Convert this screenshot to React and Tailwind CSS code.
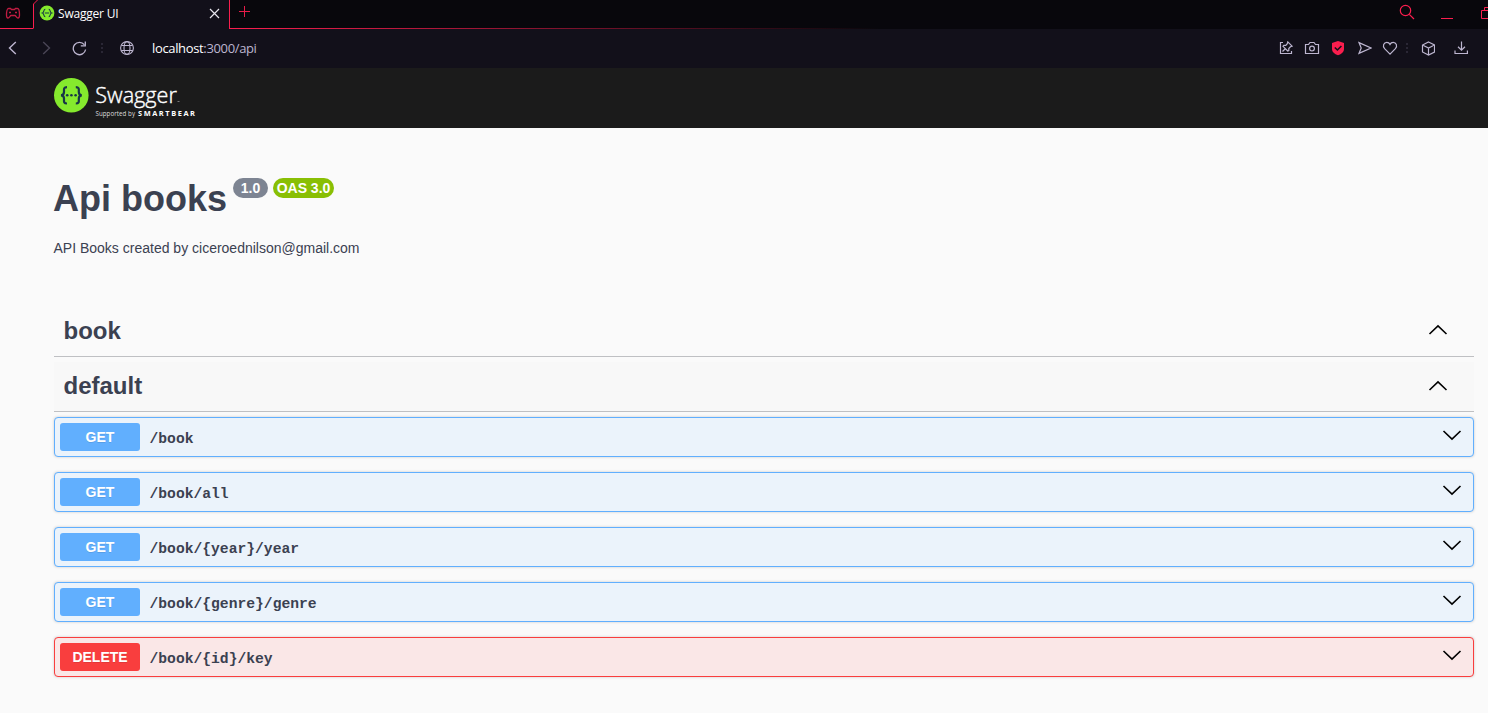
const operations = [
  { method: 'GET', path: '/book' },
  { method: 'GET', path: '/book/all' },
  { method: 'GET', path: '/book/{year}/year' },
  { method: 'GET', path: '/book/{genre}/genre' },
  { method: 'DELETE', path: '/book/{id}/key' },
];

const tones = {
  GET: { row: 'border-[#61affe] bg-[#ebf3fb]', badge: 'bg-[#61affe]' },
  DELETE: { row: 'border-[#f93e3e] bg-[#fae7e7]', badge: 'bg-[#f93e3e]' },
};

function Icon({ w = 16, h = 16, className = '', children, stroke = 1.2 }) {
  return (
    <svg
      width={w}
      height={h}
      viewBox={`0 0 ${w} ${h}`}
      fill="none"
      stroke="currentColor"
      strokeWidth={stroke}
      className={`shrink-0 ${className}`}
    >
      {children}
    </svg>
  );
}

function TabStrip() {
  return (
    <div className="flex h-[29px] bg-[#08070c] text-[#fa1e4e]">
      <div className="w-[33px] border-b border-[#fa1e4e] pt-[7px] pl-[5px]">
        <Icon w={16} h={13} stroke={1.3} className="text-[#c01c42]">
          <path d="M3.500 1.500H5.500l1 1h3l1-1h2c1.500 0 2 3.500 2 6.500 0 2.200-.4 3-1.500 3-1.300 0-2.200-2.500-3-2.500H6c-.8 0-1.700 2.500-3 2.500-1.100 0-1.500-.8-1.500-3 0-3 .5-6.500 2-6.500z" />
          <path d="M4 5.500h2M5 4.500v2M10 5.500h2M11 4.500v2" strokeWidth="1" />
        </Icon>
      </div>
      <div className="flex w-[197px] border-r border-[#fa1e4e] bg-[#12101a]">
        <svg width="6" height="29" viewBox="0 0 6 29" fill="none" className="shrink-0">
          <path d="M0 0h4.500L.5 4.500V29H0z" fill="#08070c" />
          <path d="M4.500 0L.5 4V28.500" stroke="#fa1e4e" />
        </svg>
        <svg width="16" height="16" viewBox="0 0 16 16" fill="none" className="mt-[5px] shrink-0">
          <circle cx="8" cy="8" r="7.400" fill="#85ea2d" />
          <path d="M6.300 4.300c-2 0-1 3.200-2.800 3.700 1.800.5.800 3.700 2.800 3.700M9.700 4.300c2 0 1 3.200 2.800 3.700-1.800.5-.8 3.700-2.800 3.700M5.800 8h4.400" stroke="#173647" strokeWidth="1.100" />
        </svg>
        <span className="mt-[5px] ml-[3px] w-[146px] font-['Open_Sans','Noto_Sans',sans-serif] text-[12px] leading-[17px] tracking-[-0.2px] text-white">
          Swagger UI
        </span>
        <Icon w={11} h={11} className="mt-[8px] ml-[5px] text-[#e8e6ee]">
          <path d="M1 1l9 9M10 1l-9 9" />
        </Icon>
      </div>
      <div className="relative flex grow pt-[4px]">
        <div className="absolute bottom-0 left-0 h-px w-[650px] bg-linear-to-r from-[#fa1e4e] to-transparent" />
        <Icon w={12} h={15} stroke={1} className="ml-[8px] text-[#e81c49]">
          <path d="M1 7.500h11M6.500 2v11" />
        </Icon>
        <Icon w={16} h={16} className="ml-auto">
          <circle cx="6.500" cy="6.500" r="5.200" />
          <path d="M10.300 10.300l4.700 4.700" />
        </Icon>
        <Icon w={12} h={16} stroke={1} className="ml-[26px]">
          <path d="M0 14.500h12" />
        </Icon>
        <Icon w={7} h={16} stroke={1} className="ml-[28px]">
          <path d="M7 6.500H.5v8H7M3.500 6.500v-3H7" />
        </Icon>
      </div>
    </div>
  );
}

function AddressBar() {
  return (
    <div className="flex h-[39px] items-center bg-[#12101a] pb-px text-[#bdb6d0]">
      <Icon w={9} h={14} stroke={1.4} className="ml-[8px]">
        <path d="M7.800 1L1.500 7l6.300 6" />
      </Icon>
      <Icon w={9} h={14} stroke={1.400} className="ml-[25px] text-[#4a4656]">
        <path d="M1.200 1l6.300 6-6.300 6" />
      </Icon>
      <Icon w={16} h={16} stroke={1.300} className="ml-[20px]">
        <path d="M13.300 4.600A6.200 6.200 0 1 0 14.600 9.500M14.300 1.500v4.300H9.800" />
      </Icon>
      <Icon w={2} h={10} stroke={2} className="ml-[14px] text-[#2a2735]">
        <path d="M1 0v2M1 4v2M1 8v2" />
      </Icon>
      <Icon w={16} h={16} stroke={1.100} className="ml-[16px]">
        <circle cx="8" cy="8" r="6.400" />
        <ellipse cx="8" cy="8" rx="3" ry="6.400" />
        <path d="M2.500 5.500h11M2.500 10.500h11" />
      </Icon>
      <span className="ml-[17px] pt-px font-['Open_Sans','Noto_Sans',sans-serif] text-[13px] tracking-[-0.35px] whitespace-nowrap">
        <span className="text-white">localhost</span>:3000/api
      </span>
      <div className="ml-auto flex items-center">
        <Icon w={14} h={14} stroke={1.200}>
          <path d="M4 1.500H1.500v11h11V10M3.500 10.500L6 8M8.800.900l4.300 4.300-1.700.6-1.600 1.700v2L8.700 10 4 5.300l.8-1h2l1.500-1.600z" />
        </Icon>
        <Icon w={16} h={14} className="ml-[11px]">
          <path d="M1.500 3.500h3L6 1.500h4l1.500 2h3v9h-13z" />
          <circle cx="8" cy="7.600" r="2.400" />
        </Icon>
        <svg width="14" height="16" viewBox="0 0 14 16" fill="none" className="ml-[11px]">
          <path d="M7 1l6 2v6c0 3-2.500 5-6 6.200C3.500 14 1 12 1 9V3z" fill="#fa1e4e" />
          <path d="M3.800 7.500l2.600 2.500L10.400 6" stroke="#12101a" strokeWidth="1.600" />
        </svg>
        <Icon w={14} h={14} className="ml-[13px]">
          <path d="M1 1.600L13 7 1 12.400 3.200 7z" />
        </Icon>
        <Icon w={16} h={16} className="ml-[10px]">
          <path d="M8 14.200L2.600 8.700C.2 6 1.800 2.300 4.800 2.300 6.400 2.300 7.500 3.300 8 4.400c.5-1.100 1.600-2.100 3.200-2.100 3 0 4.600 3.700 2.200 6.400z" />
        </Icon>
        <Icon w={2} h={10} stroke={2} className="ml-[8px] text-[#2a2735]">
          <path d="M1 0v2M1 4v2M1 8v2" />
        </Icon>
        <Icon w={14} h={15} stroke={1.200} className="ml-[13px]">
          <path d="M7.500 1l6 3v7l-6 3-6-3V4zM1.500 4l6 3 6-3M7.500 7v7" />
        </Icon>
        <Icon w={14} h={14} stroke={1.200} className="mr-[20px] ml-[19px]">
          <path d="M7.500 .5V9M4 5.800l3.500 3.400L11 5.800M1 9.500v3h12.400v-3" />
        </Icon>
      </div>
    </div>
  );
}

function Logo() {
  return (
    <svg width="146" height="44" viewBox="0 0 146 44" role="img">
      <circle cx="17.300" cy="19.300" r="17.300" fill="#85ea2d" />
      <g fill="none" stroke="#173647" strokeWidth="2.200">
        <path d="M13 11.200c-3.900 0-2.900 2.600-3 4.900 0 1.900-.9 3.100-3 3.200 2.100.1 3 1.400 3 3.200.1 2.400-.9 5 3 5" />
        <path d="M21.800 11.200c3.900 0 2.900 2.600 3 4.900 0 1.900.9 3.100 3 3.200-2.100.1-3 1.400-3 3.200-.1 2.400.9 5-3 5" />
      </g>
      <g fill="#173647">
        <circle cx="13.200" cy="19.300" r="1.300" />
        <circle cx="17.400" cy="19.300" r="1.300" />
        <circle cx="21.600" cy="19.300" r="1.300" />
      </g>
      <g fill="#fff" fontFamily="'Open Sans', 'Noto Sans', sans-serif">
        <text x="41.300" y="27" fontSize="22" fontWeight="300" textLength="81.500" lengthAdjust="spacingAndGlyphs" stroke="#fff" strokeWidth="0.400">Swagger</text>
        <text x="41.500" y="40" fontSize="6.200" textLength="39.500" lengthAdjust="spacing" fill="#ddd">Supported by</text>
        <text x="84" y="40" fontSize="7.400" fontWeight="700" textLength="57" lengthAdjust="spacing">SMARTBEAR</text>
      </g>
      <path d="M123.500 25.500h2" stroke="#777" />
    </svg>
  );
}

function Chevron({ up, className = '' }) {
  return (
    <svg width="20" height="12" viewBox="0 0 20 12" fill="none" stroke="#000" strokeWidth="1.600" className={`shrink-0 ${className}`}>
      <path d={up ? 'M1.500 10L10 1.800l8.500 8.200' : 'M1.500 2L10 10.200 18.500 2'} />
    </svg>
  );
}

function Section({ title, className = '', chevronClass = '' }) {
  return (
    <div className={`flex items-center justify-between border-b border-[#bfc0c3] pr-[26px] pl-[9.500px] ${className}`}>
      <h3 className="text-[24px] leading-[28px] font-bold">{title}</h3>
      <Chevron up className={chevronClass} />
    </div>
  );
}

function Operation({ method, path }) {
  const tone = tones[method];
  return (
    <div className={`flex h-[40px] items-center rounded-[4px] border pr-[11px] pl-[5px] shadow-[0_0_3px_rgba(0,0,0,0.19)] ${tone.row}`}>
      <span
        className={`flex h-[28px] w-[80px] items-center justify-center rounded-[3px] text-[14px] font-bold text-white [text-shadow:0_1px_0_rgba(0,0,0,0.1)] ${tone.badge}`}
      >
        {method}
      </span>
      <span className="mt-[4px] ml-[9.500px] font-['Liberation_Mono',monospace] text-[14.66px] leading-[18px] font-bold">{path}</span>
      <Chevron className="mb-[4px] ml-auto" />
    </div>
  );
}

export default function App() {
  return (
    <div className="h-[713px] w-[1488px] overflow-hidden bg-[#fafafa] font-['Liberation_Sans',Arial,sans-serif] text-[#3b4151]">
      <TabStrip />
      <AddressBar />
      <header className="h-[60px] bg-[#1b1b1b] pt-[8px] pl-[54px]">
        <Logo />
      </header>
      <main className="pr-[14px] pl-[54px]">
        <div className="flex items-start pt-[50px]">
          <h1 className="-ml-px w-[180px] text-[36px] leading-[42px] font-bold whitespace-nowrap">Api books</h1>
          <span className="flex h-[20px] w-[35px] items-center justify-center rounded-full bg-[#7d8492] text-[14px] font-bold text-white">
            1.0
          </span>
          <span className="ml-[5px] flex h-[20px] w-[61px] items-center justify-center rounded-full bg-[#89bf04] text-[14px] font-bold whitespace-nowrap text-white">
            OAS 3.0
          </span>
        </div>
        <p className="mt-[20px] -ml-[0.5px] text-[14px] leading-[16px]">API Books created by ciceroednilson@gmail.com</p>
        <Section title="book" className="mt-[49px] h-[52px]" chevronClass="mb-[2px]" />
        <Section title="default" className="mt-[5px] h-[50px] bg-[#f8f8f8] pb-[2px]" />
        <div className="mt-[5px] flex flex-col gap-[15px]">
          {operations.map((op) => (
            <Operation key={op.path} {...op} />
          ))}
        </div>
      </main>
    </div>
  );
}
